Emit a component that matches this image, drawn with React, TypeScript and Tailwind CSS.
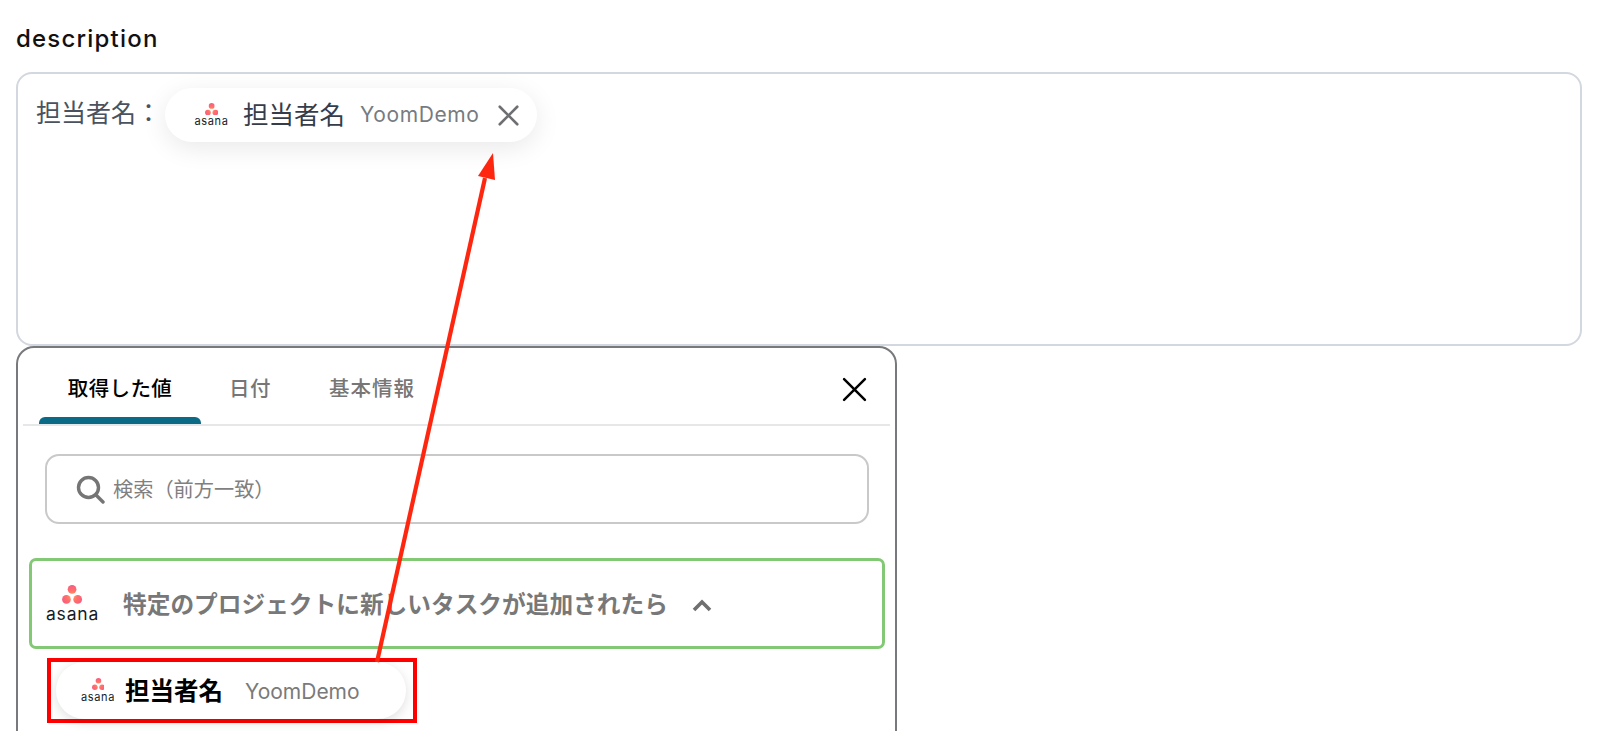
import React from "react";

const CJK = "font-['Inter','Noto_Sans_CJK_JP',sans-serif]";

function Asana({ w, id, textClass }: { w: number; id: string; textClass: string }) {
  const d = w * 0.38;
  return (
    <div className="flex flex-col items-center shrink-0 leading-none" style={{ width: w }}>
      <svg width={d} height={(d * 22.4) / 24} viewBox="0 0 24 22.4" className="block">
        <defs>
          <radialGradient id={id} gradientUnits="userSpaceOnUse" cx="12" cy="13" r="13">
            <stop offset="0" stopColor="#ffa35c" />
            <stop offset="0.5" stopColor="#ff6f6a" />
            <stop offset="1" stopColor="#f95d80" />
          </radialGradient>
        </defs>
        <circle cx="12" cy="5.2" r="5.2" fill={`url(#${id})`} />
        <circle cx="5.3" cy="17.2" r="5.2" fill={`url(#${id})`} />
        <circle cx="18.7" cy="17.2" r="5.2" fill={`url(#${id})`} />
      </svg>
      <span className={`font-['Inter',sans-serif] font-normal text-[#151b26] ${textClass}`}>asana</span>
    </div>
  );
}

function Cross({ size, color, width }: { size: number; color: string; width: number }) {
  return (
    <svg width={size} height={size} viewBox="0 0 24 24" fill="none" stroke={color} strokeWidth={width} strokeLinecap="round" className="block shrink-0">
      <path d="M2 2 22 22M22 2 2 22" />
    </svg>
  );
}

export default function App() {
  return (
    <div className={`relative h-[731px] w-[1600px] overflow-hidden bg-white ${CJK}`}>
      <div className="px-4 pt-[25px]">
        <div className="text-[24px] leading-[28px] font-medium tracking-[1.2px] text-[#111]">description</div>

        <div className="mt-[19px] h-[274px] w-[1566px] rounded-[16px] border-2 border-[#d3d7df] px-[18px] pt-[14px]">
          <div className="flex items-start">
            <span className="mt-[8px] text-[25px] leading-[34px] text-[#4a5260]">担当者名：</span>
            <div className="ml-[4px] flex h-[54px] w-[372px] items-center rounded-full bg-white pl-[29px] pr-[18px] shadow-[0_6px_26px_rgba(0,0,0,0.09)]">
              <Asana w={35} id="a1" textClass="text-[11px] tracking-[0.6px] mt-[1px]" />
              <span className="ml-[14px] text-[25.5px] leading-[34px] text-[#353d4a]">担当者名</span>
              <span className="ml-[15px] text-[21px] tracking-[0.6px] text-[#777b80]">YoomDemo</span>
              <span className="ml-auto"><Cross size={21} color="#6d6f72" width={3} /></span>
            </div>
          </div>
        </div>

        <div className="h-[400px] w-[881px] rounded-t-[18px] border-2 border-[#77797c] px-[5px]">
          <div className="relative flex h-[78px] items-end border-b-2 border-[#e6e7e9] pl-[16px]">
            <div className="flex h-[78px] w-[162px] flex-col items-center justify-end">
              <span className="mb-[13px] text-[20.5px] leading-[30px] font-medium tracking-[0.4px] text-black">取得した値</span>
              <span className="h-[7px] w-full rounded-t-[6px] bg-[#0b6a85]" />
            </div>
            <span className="mb-[20px] ml-[28px] text-[20.5px] leading-[30px] tracking-[0.5px] text-[#767676] font-medium">日付</span>
            <span className="mb-[20px] ml-[58px] text-[20.5px] leading-[30px] tracking-[1px] text-[#767676] font-medium">基本情報</span>
            <span className="mb-[22px] ml-auto mr-[23px]"><Cross size={25} color="#000" width={2.4} /></span>
          </div>

          <div className="ml-[22px] mt-[28px] flex h-[70px] w-[824px] items-center rounded-[14px] border-2 border-[#c9c9c9] pl-[29px]">
            <svg width="29" height="29" viewBox="0 0 29 29" fill="none" stroke="#757575" strokeWidth="3.4" strokeLinecap="round" className="block shrink-0">
              <circle cx="12.5" cy="12.5" r="10" />
              <path d="M20 20 27 27" />
            </svg>
            <span className="ml-[8px] pt-[2px] text-[20.2px] text-[#808080]">検索（前方一致）</span>
          </div>

          <div className="ml-[6px] mt-[34px] flex h-[91px] w-[856px] items-center rounded-[7px] border-[3px] border-[#83c875] pl-[14px]">
            <Asana w={53} id="a2" textClass="text-[17.5px] tracking-[0.8px] mt-[1px]" />
            <span className="ml-[24px] pt-[3px] text-[23.7px] font-bold text-[#787878]">特定のプロジェクトに新しいタスクが追加されたら</span>
            <svg width="20" height="13" viewBox="0 0 20 13" fill="none" stroke="#6f6f6f" strokeWidth="3.6" className="ml-[24px] mt-[3px] block">
              <path d="M2 11 10 3 18 11" />
            </svg>
          </div>

          <div className="ml-[24px] mt-[9px] h-[65px] w-[370px] border-4 border-[#ff0000] px-[5px]">
            <div className="flex h-full w-[350px] items-center rounded-full bg-white pl-[25px] shadow-[0_3px_12px_rgba(0,0,0,0.13)]">
              <Asana w={34} id="a3" textClass="text-[11px] tracking-[0.6px] mt-[1px]" />
              <span className="ml-[10px] pt-[2px] text-[24.5px] font-bold text-black">担当者名</span>
              <span className="ml-[22px] pt-[2px] text-[21px] text-[#7a7a7a]">YoomDemo</span>
            </div>
          </div>
        </div>
      </div>

      <svg width="1600" height="731" viewBox="0 0 1600 731" className="pointer-events-none absolute left-0 top-0">
        <path d="M377 662 485 178" stroke="#ff2610" strokeWidth="4.2" fill="none" />
        <path d="M493 153 478 176 495 180Z" fill="#ff2610" />
      </svg>
    </div>
  );
}
